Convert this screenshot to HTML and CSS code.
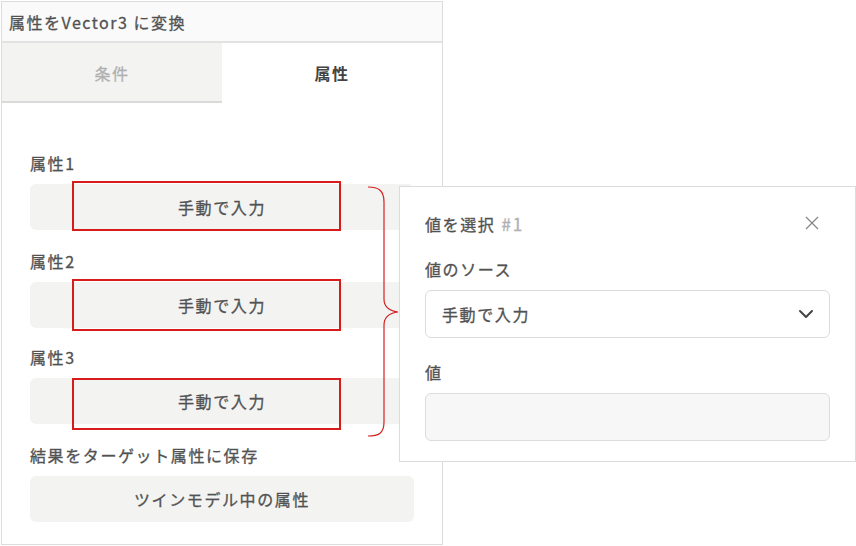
FILE: index.html
```html
<!DOCTYPE html>
<html lang="ja">
<head>
    <meta charset="UTF-8">
    <title>属性をVector3 に変換</title>
    <link rel="stylesheet" href="styles.css">
</head>
<body>
    <div class="stage">
        <div class="panel">
            <div class="panel-header">属性をVector3 に変換</div>
            <div class="tabs">
                <div class="tab">条件</div>
                <div class="tab active">属性</div>
            </div>

            <div class="panel-body">
                <div class="field">
                    <div class="field-label">属性1</div>
                    <div class="field-btn">手動で入力<span class="mark mark-1"></span></div>
                </div>
                <div class="field">
                    <div class="field-label">属性2</div>
                    <div class="field-btn">手動で入力<span class="mark mark-2"></span></div>
                </div>
                <div class="field">
                    <div class="field-label">属性3</div>
                    <div class="field-btn">手動で入力<span class="mark mark-3"></span></div>
                </div>
                <div class="field">
                    <div class="field-label">結果をターゲット属性に保存</div>
                    <div class="field-btn">ツインモデル中の属性</div>
                </div>
            </div>
        </div>

        <!-- annotation brace -->
        <svg class="brace" width="34" height="252" viewBox="0 0 34 252" fill="none" stroke="#d42020" stroke-width="1.2">
            <path d="M0 1 C 10 1, 16 4, 16 16 L 16 113 C 16 121, 22 125, 30 126 C 22 127, 16 131, 16 139 L 16 236 C 16 248, 10 250, 0 250"></path>
        </svg>

        <div class="popup">
            <div class="popup-head">
                <div class="popup-title">値を選択 <span class="num">#1</span></div>
                <svg class="close" width="14" height="14" viewBox="0 0 14 14" stroke="#888" stroke-width="1.3">
                    <line x1="1" y1="1" x2="13" y2="13"></line>
                    <line x1="13" y1="1" x2="1" y2="13"></line>
                </svg>
            </div>
            <div class="popup-label">値のソース</div>
            <div class="select">
                <span>手動で入力</span>
                <svg width="16" height="10" viewBox="0 0 16 10" fill="none" stroke="#444" stroke-width="2" stroke-linecap="round" stroke-linejoin="round">
                    <polyline points="2,2 8,8 14,2"></polyline>
                </svg>
            </div>
            <div class="popup-label">値</div>
            <div class="input"></div>
        </div>
    </div>
</body>
</html>
```

FILE: styles.css
```css
:root {
    --text: #525252;
    --text-dark: #444;
    --text-muted: #b0b0b0;
    --border: #dcdcdc;
    --field-bg: #f3f4f2;
    --red: #d81c1c;
}

body {
    margin: 0;
    background: #fff;
    font-family: "Noto Sans CJK JP", "Noto Sans", sans-serif;
    color: var(--text);
    font-size: 16px;
    letter-spacing: 1.6px;
    -webkit-text-stroke: 0.3px currentColor;
}

.stage {
    position: relative;
    width: 856px;
    height: 546px;
    padding: 1px 0 0 1px;
    box-sizing: border-box;
}

.panel {
    width: 442px;
    height: 544px;
    box-sizing: border-box;
    border: 1px solid var(--border);
    display: flex;
    flex-direction: column;
}

.panel-header {
    height: 41px;
    box-sizing: border-box;
    padding: 0 0 0 7px;
    display: flex;
    align-items: center;
    background: #fafafa;
    border-bottom: 2px solid #e2e2e2;
    letter-spacing: 1.5px;
    color: var(--text);
}

.tabs {
    display: flex;
    height: 60px;
}

.tab {
    flex: 1;
    display: flex;
    align-items: center;
    justify-content: center;
    color: var(--text-muted);
    background: var(--field-bg);
    border-bottom: 2px solid #dadada;
    padding-top: 1px;
}

.tab.active {
    background: #fff;
    border-bottom-color: transparent;
    color: var(--text-dark);
    font-weight: 700;
    -webkit-text-stroke: 0;
}

.panel-body {
    padding: 49px 28px 0 28px;
    display: flex;
    flex-direction: column;
    gap: 5px;
}

.field-label {
    line-height: 22px;
    margin-bottom: 10px;
}

.field-btn {
    position: relative;
    height: 46px;
    display: flex;
    align-items: center;
    justify-content: center;
    background: var(--field-bg);
    border-radius: 6px;
    margin-bottom: 15px;
}

.field:nth-child(2) .field-btn {
    margin-bottom: 13px;
}

.field:last-child .field-btn {
    margin-bottom: 0;
}

/* hand-placed annotation boxes */
.mark {
    position: absolute;
    left: 42px;
    top: -3px;
    width: 265px;
    height: 46px;
    border: 2px solid var(--red);
}

.mark-2 {
    height: 48px;
}

.mark-3 {
    top: 0;
    height: 48px;
}

.brace {
    position: absolute;
    left: 368px;
    top: 186px;
}

.popup {
    position: absolute;
    left: 399px;
    top: 186px;
    width: 457px;
    height: 276px;
    box-sizing: border-box;
    background: #fff;
    border: 1px solid var(--border);
    padding: 24px 25px 0 25px;
}

.popup-head {
    display: flex;
    align-items: center;
    justify-content: space-between;
    height: 24px;
    padding-right: 11px;
}

.popup-title .num {
    color: var(--text-muted);
    font-size: 17px;
    margin-left: 1px;
}

.popup-label {
    margin-top: 23px;
    line-height: 22px;
}

.select {
    margin-top: 10px;
    height: 48px;
    box-sizing: border-box;
    border: 1px solid var(--border);
    border-radius: 6px;
    display: flex;
    align-items: center;
    justify-content: space-between;
    padding: 0 15px 0 16px;
}

.input {
    margin-top: 10px;
    height: 48px;
    box-sizing: border-box;
    border: 1px solid var(--border);
    border-radius: 6px;
    background: #f7f7f7;
}
```
